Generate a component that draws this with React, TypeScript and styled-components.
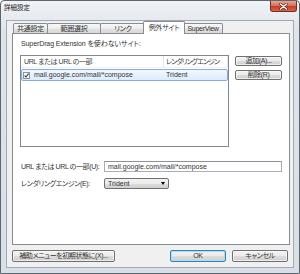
import styled, { createGlobalStyle } from 'styled-components';

const GlobalStyle = createGlobalStyle`
  html, body { margin: 0; padding: 0; background: #fff; }
  body {
    font-family: "Liberation Sans", "Noto Sans CJK JP", sans-serif;
    font-size: 7px;
    line-height: 10px;
    color: #333;
    font-feature-settings: "palt";
  }
  * { box-sizing: border-box; }
`;

const Window = styled.div`
  width: 300px;
  height: 274px;
  border: 1px solid #5d6570;
  border-radius: 4px 4px 0 0;
  background: linear-gradient(#f1f3f6, #dfe4ea 30px, #d9dfe6);
  display: flex;
  flex-direction: column;
  overflow: hidden;
`;

const TitleBar = styled.div`
  height: 19px;
  display: flex;
  justify-content: space-between;
  align-items: flex-start;
  padding-left: 3px;
`;

const Title = styled.div`
  font-size: 6.5px;
  line-height: 14px;
  color: #1a1a1a;
`;

const CloseButton = styled.div`
  width: 27px;
  height: 11px;
  margin-right: 2px;
  border: 1px solid #7a2c20;
  border-top: none;
  border-radius: 0 0 3px 3px;
  background: linear-gradient(#e8a593, #d5735d 45%, #c23d24 50%, #d2654b);
  display: flex;
  align-items: center;
  justify-content: center;
`;

const Client = styled.div`
  margin: 0 5px;
  height: 248px;
  border: 1px solid #a2aab5;
  background: #f0f0f0;
  display: flex;
  flex-direction: column;
`;

const TabStrip = styled.div`
  height: 12px;
  padding-left: 6px;
  display: flex;
  align-items: flex-end;
`;

const Tab = styled.div<{ $w: number; $active?: boolean }>`
  width: ${(p) => p.$w}px;
  height: ${(p) => (p.$active ? 13 : 10)}px;
  margin: 0 ${(p) => (p.$active ? -2 : -1)}px ${(p) => (p.$active ? -1 : 0)}px ${(p) => (p.$active ? -2 : 0)}px;
  border: 1px solid #898c95;
  border-bottom: none;
  border-radius: 2px 2px 0 0;
  background: ${(p) => (p.$active ? '#fff' : 'linear-gradient(#f8f8f8, #ececec 50%, #e2e2e2 50%, #dadada)')};
  position: relative;
  z-index: ${(p) => (p.$active ? 2 : 1)};
  text-align: center;
  line-height: ${(p) => (p.$active ? 11 : 9)}px;
  letter-spacing: -0.3px;
  white-space: nowrap;
`;

const Panel = styled.div`
  margin: 0 3px 0 5px;
  height: 212px;
  border: 1px solid #898c95;
  background: #fff;
  padding: 5px 6px 0 7px;
  display: flex;
  flex-direction: column;
  position: relative;
  z-index: 1;
`;

const PanelLabel = styled.div`
  padding-left: 1px;
  line-height: 10px;
  letter-spacing: -0.1px;
`;

const ListArea = styled.div`
  margin-top: 6px;
  display: flex;
  gap: 6px;
  align-items: flex-start;
`;

const ListBox = styled.div`
  width: 209px;
  height: 92px;
  border: 1px solid #828790;
  background: #fff;
`;

const ListHeader = styled.div`
  height: 12px;
  display: flex;
  border-bottom: 1px solid #f2f2f2;
`;

const HeaderCell = styled.div<{ $w?: number; $tight?: number }>`
  width: ${(p) => (p.$w ? `${p.$w}px` : 'auto')};
  flex: ${(p) => (p.$w ? 'none' : '1')};
  padding-left: ${(p) => (p.$w ? 3 : 2)}px;
  line-height: 12px;
  color: #3c3c3c;
  border-right: 1px solid #e3e6ea;
  letter-spacing: ${(p) => p.$tight ?? -0.4}px;
  white-space: nowrap;
  overflow: hidden;
`;

const Row = styled.div<{ $selected?: boolean }>`
  height: 12px;
  margin-top: 1px;
  display: flex;
  align-items: center;
  border: 1px solid ${(p) => (p.$selected ? '#84acdd' : 'transparent')};
  border-radius: 2px;
  background: ${(p) => (p.$selected ? 'linear-gradient(#f2f8fe, #dcebfc)' : 'transparent')};
`;

const Cell = styled.div<{ $w?: number }>`
  width: ${(p) => (p.$w ? `${p.$w}px` : 'auto')};
  flex: ${(p) => (p.$w ? 'none' : '1')};
  display: flex;
  align-items: center;
  gap: 4px;
  padding-left: ${(p) => (p.$w ? 1 : 2)}px;
  line-height: 10px;
  white-space: nowrap;
`;

const CheckBox = styled.div`
  width: 7px;
  height: 7px;
  border: 1px solid #8e8f8f;
  background: linear-gradient(#f4f4f4, #fff);
  display: flex;
  align-items: center;
  justify-content: center;
`;

const ButtonColumn = styled.div`
  margin-top: 1px;
  display: flex;
  flex-direction: column;
  gap: 4px;
`;

const Button = styled.div<{ $w: number; $h?: number; $default?: boolean }>`
  width: ${(p) => p.$w}px;
  height: ${(p) => p.$h ?? 12}px;
  border: 1px solid ${(p) => (p.$default ? '#3c7fb1' : '#707070')};
  border-radius: 2px;
  background: linear-gradient(#f2f2f2, #ebebeb 50%, #dddddd 50%, #cfcfcf);
  box-shadow: inset 0 0 0 1px ${(p) => (p.$default ? '#a7dff6' : 'rgba(255,255,255,0.6)')};
  display: flex;
  align-items: center;
  justify-content: center;
  line-height: 8px;
  letter-spacing: -0.4px;
  white-space: nowrap;
`;

const Form = styled.div`
  margin-top: 14px;
  display: flex;
  flex-direction: column;
  gap: 6px;
`;

const FormRow = styled.div`
  height: 11px;
  padding-left: 1px;
  display: flex;
  align-items: center;
`;

const FieldLabel = styled.div`
  width: 83px;
  letter-spacing: -0.4px;
  white-space: nowrap;
`;

const TextInput = styled.div`
  width: 178px;
  height: 11px;
  border: 1px solid #abadb3;
  border-top-color: #8e9199;
  background: #fff;
  padding-left: 3px;
  line-height: 9px;
  white-space: nowrap;
`;

const Select = styled.div`
  width: 65px;
  height: 11px;
  border: 1px solid #707070;
  border-radius: 2px;
  background: linear-gradient(#f2f2f2, #ebebeb 50%, #dddddd 50%, #cfcfcf);
  padding: 0 3px 0 3px;
  display: flex;
  align-items: center;
  justify-content: space-between;
  line-height: 9px;
`;

const Arrow = styled.span`
  width: 0;
  height: 0;
  border-left: 2.5px solid transparent;
  border-right: 2.5px solid transparent;
  border-top: 3px solid #000;
`;

const Footer = styled.div`
  height: 22px;
  padding: 5px 5px 0 5px;
  display: flex;
  gap: 6px;
  align-items: flex-start;
`;

const Spacer = styled.div`
  flex: 1;
`;

export default function App() {
  return (
    <>
      <GlobalStyle />
      <Window>
        <TitleBar>
          <Title>詳細設定</Title>
          <CloseButton>
            <svg width="9" height="7" viewBox="0 0 9 7">
              <path d="M1.5 1 L7.5 6 M7.5 1 L1.5 6" stroke="#5a1f14" strokeWidth="2.6" strokeLinecap="round" />
              <path d="M1.5 1 L7.5 6 M7.5 1 L1.5 6" stroke="#fff" strokeWidth="1.4" strokeLinecap="round" />
            </svg>
          </CloseButton>
        </TitleBar>
        <Client>
          <TabStrip>
            <Tab $w={35}>共通設定</Tab>
            <Tab $w={54}>範囲選択</Tab>
            <Tab $w={46}>リンク</Tab>
            <Tab $w={42} $active>例外サイト</Tab>
            <Tab $w={40}>SuperView</Tab>
          </TabStrip>
          <Panel>
            <PanelLabel>SuperDrag Extension を使わないサイト:</PanelLabel>
            <ListArea>
              <ListBox>
                <ListHeader>
                  <HeaderCell $w={143}>URL または URL の一部</HeaderCell>
                  <HeaderCell $tight={-1}>レンダリングエンジン</HeaderCell>
                </ListHeader>
                <Row $selected>
                  <Cell $w={142}>
                    <CheckBox>
                      <svg width="5" height="5" viewBox="0 0 5 5">
                        <path d="M0.6 2.6 L2 4 L4.5 0.6" fill="none" stroke="#1f3a66" strokeWidth="1.1" />
                      </svg>
                    </CheckBox>
                    mail.google.com/mail/*compose
                  </Cell>
                  <Cell>Trident</Cell>
                </Row>
              </ListBox>
              <ButtonColumn>
                <Button $w={47} $h={10}>追加(A)...</Button>
                <Button $w={47} $h={10}>削除(R)</Button>
              </ButtonColumn>
            </ListArea>
            <Form>
              <FormRow>
                <FieldLabel>URL または URL の一部(U):</FieldLabel>
                <TextInput>mail.google.com/mail/*compose</TextInput>
              </FormRow>
              <FormRow>
                <FieldLabel>レンダリングエンジン(E):</FieldLabel>
                <Select>
                  Trident
                  <Arrow />
                </Select>
              </FormRow>
            </Form>
          </Panel>
          <Footer>
            <Button $w={103}>補助メニューを初期状態に(X)...</Button>
            <Spacer />
            <Button $w={56} $default>OK</Button>
            <Button $w={56}>キャンセル</Button>
          </Footer>
        </Client>
      </Window>
    </>
  );
}
